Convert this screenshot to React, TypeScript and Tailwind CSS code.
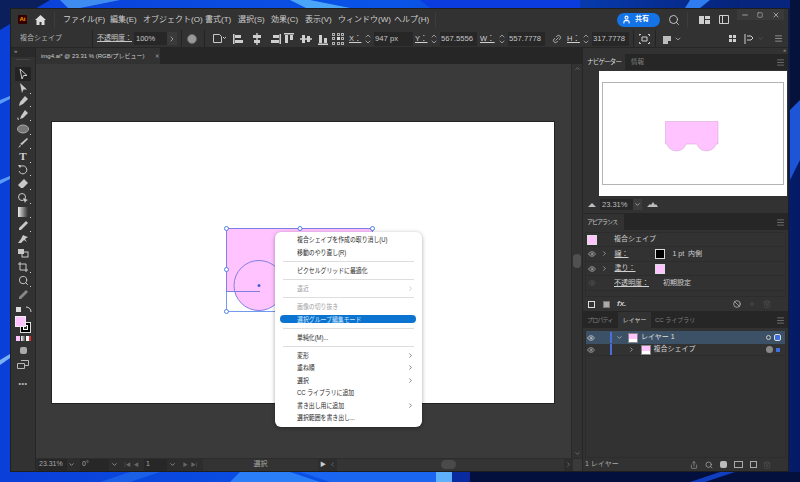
import React from "react";
import { ChevronRight, ChevronDown, ChevronUp, Search, Eye, Minus, X, Menu, Trash2, Ban, Link2, Share, Plus, Square, User } from "lucide-react";

const JP = "font-['Liberation_Sans','Noto_Sans_CJK_JP',sans-serif]";

const Sep = () => <div className="w-px h-full bg-[#232323] shrink-0" />;

const Spinner = () => (
  <div className="w-[10px] h-[14px] flex flex-col items-center justify-center text-[#c8c8c8] shrink-0">
    <ChevronUp size={8} strokeWidth={2} className="-mb-[1px]" />
    <ChevronDown size={8} strokeWidth={2} className="-mt-[1px]" />
  </div>
);

const Field = ({ label, value, w, ml, lw = "w-[14px]" }: { label: string; value: string; w: string; ml: string; lw?: string }) => (
  <div className={`flex items-center shrink-0 ${ml}`}>
    <span className={`text-[7.5px] text-[#d0d0d0] underline underline-offset-1 ${lw}`}>{label}</span>
    <Spinner />
    <div className={`h-[14px] bg-[#272727] text-[7.7px] text-[#c4c4c4] flex items-center pl-[1px] ml-[1px] ${w}`}>{value}</div>
  </div>
);

// small align icons for the control bar
const Align = ({ d }: { d: string }) => (
  <svg width="12" height="12" viewBox="0 0 12 12" className="shrink-0" fill="#cfcfcf">
    <path d={d} />
  </svg>
);

const Tool = ({ children, active, tick = true }: { children: React.ReactNode; active?: boolean; tick?: boolean }) => (
  <div className={`relative h-[13.8px] w-[16px] flex items-center justify-center shrink-0 ${active ? "bg-[#232323] rounded-[1px]" : ""}`}>
    {children}
    {tick && <div className="absolute right-[0px] bottom-[1px] w-[1px] h-[1px] bg-[#d0d0d0]" />}
  </div>
);

const Ic = ({ children }: { children: React.ReactNode }) => (
  <svg width="12" height="12" viewBox="0 0 12 12" fill="#c9c9c9" stroke="none">
    {children}
  </svg>
);

const Condensed = ({ children }: { children: React.ReactNode }) => (
  <span className="inline-block origin-left scale-x-[0.84]">{children}</span>
);

const MenuItem = ({ label, arrow, disabled }: { label: string; arrow?: boolean; disabled?: boolean }) => (
  <div className={`flex items-center justify-between pl-[22px] pr-[8px] shrink-0 h-[12.6px] ${disabled ? "text-[#a0a0a0]" : "text-[#2a2a2a]"}`}>
    <Condensed>{label}</Condensed>
    {arrow && <ChevronRight size={7} strokeWidth={2} className={disabled ? "text-[#aaa]" : "text-[#333]"} />}
  </div>
);

const MenuSep = () => <div className="h-px bg-[#dedede] mx-[8px] my-[2.2px] shrink-0" />;

const PanelMenu = () => <Menu size={9} strokeWidth={1.6} className="text-[#9a9a9a]" />;

const Thumb = () => (
  <div className="w-[10px] h-[10px] bg-white flex flex-col shrink-0 border border-[#888]">
    <div className="h-[5px] bg-[#ffc4ff]" />
  </div>
);

const Wallpaper = () => (
  <svg className="absolute inset-0" width="800" height="482" viewBox="0 0 800 482" preserveAspectRatio="none">
    <defs>
      <linearGradient id="wp" x1="0" y1="0" x2="1" y2="0">
        <stop offset="0" stopColor="#0a3fd8" />
        <stop offset="0.5" stopColor="#0a55e8" />
        <stop offset="1" stopColor="#041a66" />
      </linearGradient>
    </defs>
    <rect width="800" height="482" fill="url(#wp)" />
    <path d="M0 0h50L0 30z" fill="#0a1f5c" />
    <path d="M60 0h60L70 10z" fill="#3f8cf0" />
    <path d="M290 0h20L360 10h-50z" fill="#4aa5f8" />
    <path d="M420 0h160v8H430z" fill="#0a3ce0" />
    <path d="M690 0h20L700 8h-15z" fill="#2f7bf0" />
    <path d="M740 0h60v8h-60z" fill="#08257e" />
    <path d="M790 100L800 90V160L790 180z" fill="#1c55d8" />
    <path d="M790 0h10v100l-10 10z" fill="#04123c" />
    <path d="M0 100L10 96V99L0 104z" fill="#5a9cf5" />
    <path d="M0 180L10 176V179L0 184z" fill="#5a9cf5" />
    <path d="M0 360L10 354V358L0 365z" fill="#7ab0f5" />
    <path d="M100 482L130 472H160L130 482z" fill="#1a5fe8" />
    <path d="M240 472H290L320 482H230z" fill="#2a7ff8" />
    <path d="M300 472H450V482H330z" fill="#1a66f0" />
    <path d="M436 472H452V482H436z" fill="#5fb0fa" />
    <path d="M452 472H470V482H452z" fill="#0a2aa0" />
    <path d="M470 472H800V482H470z" fill="#030f3c" />
    <path d="M690 482L720 472H735L705 482z" fill="#0f3fc0" />
  </svg>
);

export default function App() {
  return (
    <div className={`relative w-[800px] h-[482px] overflow-hidden whitespace-nowrap ${JP}`}>
      <Wallpaper />
      {/* app window */}
      <div className="absolute left-[10px] top-[8px] w-[779px] h-[464px] bg-[#323232] flex flex-col border border-[#1e1e1e] overflow-hidden">
        {/* title bar */}
        <div className="h-[21px] flex items-center shrink-0 text-[8px] text-[#cfcfcf]">
          <div className="w-[9px] h-[9px] ml-[7px] bg-[#330000] text-[#ff9a00] text-[6px] font-bold flex items-center justify-center rounded-[1px]">Ai</div>
          <svg width="11" height="10" viewBox="0 0 11 10" className="ml-[8px]" fill="#dcdcdc"><path d="M5.5 0L11 5H9.5V10H6.5V7H4.5V10H1.5V5H0z" /></svg>
          <div className="w-px h-[16px] bg-[#3d3d3d] ml-[8px]" />
          <div className="flex ml-[8px]">
            <span className="w-[47px]">ファイル(F)</span>
            <span className="w-[33px]">編集(E)</span>
            <span className="w-[62px]">オブジェクト(O)</span>
            <span className="w-[33px]">書式(T)</span>
            <span className="w-[33px]">選択(S)</span>
            <span className="w-[34px]">効果(C)</span>
            <span className="w-[33px]">表示(V)</span>
            <span className="w-[56px]">ウィンドウ(W)</span>
            <span className="w-[40px]">ヘルプ(H)</span>
          </div>
          <div className="w-px h-[16px] bg-[#3d3d3d] ml-[1px]" />
          <div className="ml-[181px] w-[43px] h-[14px] bg-[#1473e6] rounded-full flex items-center pl-[5px] gap-[4px] text-white text-[7px] font-bold">
            <User size={9} strokeWidth={3} />
            <span>共有</span>
          </div>
          <Search size={12} strokeWidth={1.8} className="ml-[8px] text-[#d0d0d0]" />
          <div className="w-px h-[16px] bg-[#3d3d3d] ml-[7px]" />
          <svg width="11" height="8" viewBox="0 0 11 8" className="ml-[11px]" fill="#cfcfcf"><path d="M0 0h5v8H0zM6 0h5v3H6zM6 4h5v4H6z" /></svg>
          <svg width="10" height="9" viewBox="0 0 10 9" className="ml-[9px]" fill="none" stroke="#cfcfcf"><path d="M.5.5h9v8h-9zM3.5.5v8" /></svg>
          <div className="ml-[8px] w-[47px] h-[11px] -mt-[10px] bg-[#3a3a3a] flex items-center justify-around text-[#cfcfcf]">
            <Minus size={8} strokeWidth={2} />
            <Square size={6} strokeWidth={2} />
            <X size={8} strokeWidth={2} />
          </div>
        </div>
        {/* control bar */}
        <div className="h-[17px] flex items-center shrink-0 text-[7px] text-[#c8c8c8] bg-[#323232]">
          <span className="ml-[9px] w-[72px] text-[#b4b4b4]">複合シェイプ</span>
          <Sep />
          <span className="ml-[4px] w-[37px] underline underline-offset-1">不透明度：</span>
          <div className="w-[33px] h-[13px] bg-[#272727] text-[7.5px] flex items-center pl-[2px]">100%</div>
          <div className="w-[10px] h-[13px] bg-[#3a3a3a] flex items-center justify-center"><ChevronRight size={8} strokeWidth={2} /></div>
          <div className="w-[4px]" />
          <Sep />
          <div className="w-[10px] h-[10px] rounded-full bg-[#9a9a9a] border border-[#666] ml-[5px] shrink-0" />
          <div className="w-[7px]" />
          <Sep />
          <div className="ml-[7px] flex items-center w-[20px]">
            <svg width="15" height="11" viewBox="0 0 15 11" fill="none" stroke="#c9c9c9"><path d="M1.500 1.500v8h8v-6l-2-2zM11 4l1.500 1.500L14 4" /></svg>
          </div>
          <div className="flex items-center gap-[6px] ml-[1px] w-[46px]">
            <Align d="M0 1h1.500v10H0zM2 2h6v3H2zM2 7h8v3H2z" />
            <Align d="M5.300 0h1.400v12H5.300zM2 2h8v3H2zM3 7h6v3H3z" />
            <Align d="M10.500 1H12v10h-1.500zM4 2h6v3H4zM2 7h8v3H2z" />
          </div>
          <div className="flex items-center gap-[5px] ml-[4px] w-[46px]">
            <Align d="M1 0h10v1.500H1zM2 2h3v8H2zM7 2h3v5H7z" />
            <Align d="M0 5.300h12v1.400H0zM2 2h3v8H2zM7 3h3v6H7z" />
            <Align d="M1 10.500h10V12H1zM2 2h3v8H2zM7 5h3v5H7z" />
          </div>
          <div className="w-[12px] h-[12px] ml-[3px] grid grid-cols-3 gap-[1.5px] shrink-0">
            {Array.from({ length: 9 }).map((_, i) => (
              <div key={i} className={i === 4 ? "bg-[#d8d8d8]" : "border border-[#b0b0b0]"} />
            ))}
          </div>
          <Field label="X：" value="947 px" w="w-[39px]" ml="ml-[5px]" />
          <Field label="Y：" value="567.5556" w="w-[37px]" ml="ml-[2px]" />
          <Field label="W：" value="557.7778" w="w-[37px]" ml="ml-[3px]" lw="w-[17px]" />
          <Link2 size={10} strokeWidth={1.8} className="ml-[7px] shrink-0 -rotate-45" />
          <Field label="H：" value="317.7778" w="w-[37px]" ml="ml-[5px]" />
          <div className="w-[4px]" />
          <Sep />
          <svg width="11" height="10" viewBox="0 0 11 10" className="ml-[5px] shrink-0" fill="none" stroke="#cfcfcf"><path d="M0 2V.5h2M9 .5h1.500V2M10.500 8v1.500H9M2 9.500H.5V8M3 3h5v4H3z" /></svg>
          <div className="w-[5px]" />
          <Sep />
          <svg width="10" height="10" viewBox="0 0 10 10" className="ml-[5px] shrink-0" fill="#bcbcbc"><path d="M2 2h8v5H7v3H2z" /></svg>
          <ChevronDown size={8} strokeWidth={2} className="ml-[3px] shrink-0" />
          <div className="ml-[47px] w-[7px] h-[7px] grid grid-cols-2 gap-[1px] shrink-0">
            {[0, 1, 2, 3].map((i) => <div key={i} className="bg-[#cfcfcf]" />)}
          </div>
          <svg width="10" height="10" viewBox="0 0 10 10" className="ml-[8px] shrink-0" fill="none" stroke="#cfcfcf"><path d="M1 0v10M3 2h4l2 2-2 2H3" /></svg>
          <ChevronDown size={7} strokeWidth={2} className="ml-[3px] text-[#666] shrink-0" />
          <Menu size={9} strokeWidth={1.6} className="ml-[10px] shrink-0" />
        </div>
        {/* body */}
        <div className="flex-1 flex min-h-0 border-t border-[#262626]">
          {/* tool strip */}
          <div className="w-[25px] shrink-0 flex flex-col items-center bg-[#323232] border-r border-[#262626]">
            <div className="h-[9px] w-full bg-[#2a2a2a] text-[#aaa] text-[6px] leading-[7px] pl-[3px] shrink-0">»</div>
            <div className="h-px w-[14px] bg-[#444] mt-[2px] mb-[7px] shrink-0" />
            <Tool active tick={false}><Ic><path d="M3 1l7 6.500H6.500L5 11z" fill="none" stroke="#c9c9c9" /></Ic></Tool>
            <Tool><Ic><path d="M3 1l7 6.500H6.500L5 11z" /></Ic></Tool>
            <Tool><Ic><path d="M8 1l3 3-5 5-4 2 1-4z" /></Ic></Tool>
            <Tool><Ic><path d="M8 1l3 3-5 5-3 1 1-3zM1 8c-2 3 1 3 1 3" /></Ic></Tool>
            <Tool><Ic><ellipse cx="6" cy="6" rx="5.500" ry="4" fill="#777" stroke="#aaa" /></Ic></Tool>
            <Tool><Ic><path d="M10 1l1 1-6 6-2-1zM3 8l1 1-3 2z" /></Ic></Tool>
            <Tool><span className="text-[11px] font-bold leading-none text-[#d0d0d0] font-['Liberation_Serif',serif]">T</span></Tool>
            <Tool><Ic><path d="M3 3a4 4 0 1 1-1 4" fill="none" stroke="#c9c9c9" /><path d="M1 1l3 0-1 3z" /></Ic></Tool>
            <Tool><Ic><path d="M7 1l4 4-5 5H4L1 7z" /></Ic></Tool>
            <Tool><Ic><circle cx="5" cy="5" r="3.500" fill="none" stroke="#c9c9c9" /><path d="M6 6l5 2-2 1-1 2z" /></Ic></Tool>
            <Tool><div className="w-[10px] h-[10px] bg-gradient-to-r from-[#eee] to-[#333]" /></Tool>
            <Tool><Ic><path d="M9 1l2 2-1 1-6 6H2V8l6-6z" /></Ic></Tool>
            <Tool tick={false}><Ic><path d="M1 10l3-4 2-4 2 1 3 1-3 2 2 3-3-2-3 3z" /></Ic></Tool>
            <Tool tick={false}><Ic><rect x="1" y="2" width="6" height="5" /><rect x="5" y="5" width="6" height="5" fill="none" stroke="#c9c9c9" /></Ic></Tool>
            <Tool><Ic><path d="M3 1v8h8M1 3h8v8" fill="none" stroke="#c9c9c9" /></Ic></Tool>
            <Tool><Search size={11} strokeWidth={2} className="text-[#cdcdcd]" /></Tool>
            <Tool tick={false}><Ic><path d="M9 1l2 2-1 1-6 6H2V8l6-6z" fill="#888" /></Ic></Tool>
            <div className="flex items-center gap-[3px] mt-[4px] shrink-0">
              <div className="w-[7px] h-[7px] bg-[#ddd] border border-[#333]" />
              <svg width="7" height="7" viewBox="0 0 7 7" fill="none" stroke="#cfcfcf"><path d="M1 1c3 0 5 2 5 5" /></svg>
            </div>
            {/* fill and stroke swatches */}
            <div className="relative w-[16px] h-[17px] mt-[3px] shrink-0">
              <div className="absolute right-0 bottom-0 w-[11px] h-[11px] border border-[#ddd] bg-black flex items-center justify-center">
                <div className="w-[5px] h-[5px] border border-white bg-[#323232]" />
              </div>
              <div className="absolute left-0 top-0 w-[11px] h-[11px] bg-[#ffc4ff] border border-[#eee]" />
            </div>
            <div className="flex gap-[1px] mt-[3px] shrink-0">
              <div className="w-[4px] h-[5px] bg-[#ffc4ff]" />
              <div className="w-[4px] h-[5px] bg-gradient-to-r from-white to-[#555]" />
              <div className="w-[5px] h-[5px] bg-white border-r-2 border-[#e03030]" />
            </div>
            <div className="w-[7px] h-[7px] bg-[#aaa] rounded-[2px] mt-[6px] shrink-0" />
            <svg width="12" height="9" viewBox="0 0 12 9" className="mt-[6px] shrink-0" fill="none" stroke="#b8b8b8"><path d="M4 .5h7.500v5H8M.5 3.500h7v5h-7z" /></svg>
            <div className="text-[#bbb] text-[7px] font-bold leading-none mt-[11px] tracking-[0.5px] shrink-0">•••</div>
          </div>
          {/* document area */}
          <div className="w-[546px] shrink-0 flex flex-col">
            <div className="h-[16px] shrink-0 bg-[#262626] flex">
              <div className="w-[124px] bg-[#323232] text-[6px] text-[#cfcfcf] flex items-center pl-[5px] gap-[11px]">
                <span>img4.ai* @ 23.31 % (RGB/プレビュー)</span>
                <X size={6} strokeWidth={3} />
              </div>
            </div>
            <div className="flex-1 flex min-h-0">
              <div className="relative w-[535px] bg-[#3a3a3a] shrink-0 overflow-hidden">
                {/* artboard */}
                <div className="absolute left-[16px] top-[58px] w-[502px] h-[281px] bg-white shadow-[0_0_0_1px_#222]" />
                <svg className="absolute left-[186px] top-[159.5px]" width="154" height="92" viewBox="0 0 154 92" fill="none">
                  <rect x="4.500" y="4.500" width="146" height="63" fill="#ffc4ff" stroke="#7f7fe6" />
                  <circle cx="37" cy="61.500" r="25" fill="#ffc4ff" stroke="#7f7fe6" />
                  <path d="M4.500 67.500H38" stroke="#7f7fe6" />
                  <path d="M4.500 67.500V87.500H150.500" stroke="#4f81e8" strokeWidth="0.8" />
                  <circle cx="37" cy="61.500" r="1.500" fill="#4060e0" />
                  {[[4.5, 4.5], [78, 4.5], [150.5, 4.5], [4.5, 45.5], [4.5, 87.5]].map(([x, y], i) => (
                    <circle key={i} cx={x} cy={y} r="2" fill="#fff" stroke="#4f81e8" />
                  ))}
                </svg>
                {/* context menu */}
                <div className="absolute left-[239px] top-[168px] w-[147px] h-[195px] bg-white rounded-[6px] shadow-[0_1px_4px_rgba(0,0,0,0.35)] flex flex-col pt-[1.7px] text-[7px] leading-none">
                  <MenuItem label="複合シェイプを作成の取り消し(U)" />
                  <MenuItem label="移動のやり直し(R)" />
                  <MenuSep />
                  <MenuItem label="ピクセルグリッドに最適化" />
                  <MenuSep />
                  <MenuItem label="遠近" arrow disabled />
                  <MenuSep />
                  <MenuItem label="画像の切り抜き" disabled />
                  <div className="h-[12.6px] shrink-0 flex items-center">
                    <div className="h-[8px] w-[136px] ml-[5px] bg-[#0a74d0] rounded-full text-[#cde4ff] flex items-center pl-[17px]">
                      <Condensed>選択グループ編集モード</Condensed>
                    </div>
                  </div>
                  <MenuSep />
                  <MenuItem label="単純化(M)..." />
                  <MenuSep />
                  <MenuItem label="変形" arrow />
                  <MenuItem label="重ね順" arrow />
                  <MenuItem label="選択" arrow />
                  <MenuItem label="CC ライブラリに追加" />
                  <MenuItem label="書き出し用に追加" arrow />
                  <MenuItem label="選択範囲を書き出し..." />
                </div>
              </div>
              {/* vertical scrollbar */}
              <div className="w-[11px] bg-[#323232] shrink-0 flex flex-col items-center justify-between border-l border-[#2a2a2a]">
                <ChevronUp size={7} strokeWidth={2} className="text-[#8a8a8a] mt-[1px]" />
                <div className="w-[8px] h-[14px] bg-[#505050] rounded-full" />
                <ChevronDown size={7} strokeWidth={2} className="text-[#8a8a8a] mb-[1px]" />
              </div>
            </div>
            {/* status bar */}
            <div className="h-[13px] shrink-0 bg-[#2d2d2d] flex items-center text-[7px] text-[#a8a8a8]">
              <div className="w-[29px] h-[12px] bg-[#272727] ml-[2px] flex items-center pl-[1px]">23.31%</div>
              <div className="w-[9px] flex justify-center"><ChevronDown size={7} strokeWidth={2.5} /></div>
              <div className="w-[29px] h-[12px] bg-[#272727] ml-[4px] flex items-center pl-[2px]">0°</div>
              <div className="w-[10px] flex justify-center"><ChevronDown size={7} strokeWidth={2.5} /></div>
              <div className="w-[25px] flex justify-center gap-[3px] text-[#666] text-[5px]"><span>|◀</span><span>◀</span></div>
              <div className="w-[23px] h-[12px] bg-[#272727] flex items-center pl-[2px]">1</div>
              <div className="w-[10px] flex justify-center"><ChevronDown size={7} strokeWidth={2.5} /></div>
              <div className="w-[26px] flex justify-center gap-[3px] text-[#666] text-[5px]"><span>▶</span><span>▶|</span></div>
              <div className="w-[115px] h-[12px] flex items-center justify-center bg-[#333]">選択</div>
              <div className="w-[10px] flex justify-center text-[#ccc] text-[6px]">▶</div>
              <ChevronRight size={7} className="rotate-180 text-[#888] ml-[1px]" strokeWidth={2} />
              <div className="flex-1 h-[12px] ml-[1px] bg-[#343434] flex items-center">
                <div className="w-[15px] h-[9px] rounded-full bg-[#4a4a4a] ml-[104px]" />
              </div>
              <ChevronRight size={7} strokeWidth={2} className="text-[#888] mx-[1px]" />
              <div className="w-[9px] h-[12px] bg-[#3a3a3a]" />
            </div>
          </div>
          {/* right panels */}
          <div className="flex-1 min-w-0 flex flex-col bg-[#262626] text-[7px] text-[#bdbdbd] border-l border-[#262626]">
            <div className="h-[6px] bg-[#323232] text-right pr-[2px] text-[5px] leading-[5px] text-[#aaa]">«</div>
            {/* navigator */}
            <div className="h-[16px] flex items-center shrink-0 bg-[#262626]">
              <div className="w-[42px] h-full bg-[#323232] flex items-center pl-[4px] text-[#ddd] text-[6.5px] tracking-[-0.8px]">ナビゲーター</div>
              <div className="w-[20px] pl-[6px] text-[#808080] text-[6.5px]">情報</div>
              <div className="flex-1 flex justify-end pr-[3px]"><PanelMenu /></div>
            </div>
            <div className="h-[143px] shrink-0 bg-[#323232] flex flex-col">
              <div className="h-[125px] w-[188px] bg-white ml-[16px] mt-px shrink-0 flex flex-col items-center justify-center">
                <div className="w-[182px] h-[103px] border border-[#b4b4b4] flex items-center justify-center">
                  <svg width="54" height="32" viewBox="0 0 54 32" className="mt-[7px] -ml-[3px]">
                    <path d="M.5 .5H53V23H51A10 10 0 0 1 32 23H21A10 10 0 0 1 2 23H.5z" fill="#ffc4ff" stroke="#d8a8d8" strokeWidth="0.6" />
                  </svg>
                </div>
              </div>
              <div className="h-[17px] flex items-center text-[7.5px] pl-[5px]">
                <svg width="8" height="4" viewBox="0 0 8 4" fill="#bdbdbd"><path d="M4 0l4 4H0z" /></svg>
                <div className="w-[33px] h-[11px] bg-[#272727] ml-[4px] flex items-center pl-[2px]">23.31%</div>
                <div className="w-[9px] h-[11px] bg-[#3c3c3c] flex items-center justify-center"><ChevronDown size={7} strokeWidth={2.5} /></div>
                <svg width="11" height="5" viewBox="0 0 11 5" fill="#bdbdbd" className="ml-[5px]"><path d="M0 5l3-3 1 1 2-3 2 3 1-1 2 3z" /></svg>
              </div>
            </div>
            {/* appearance */}
            <div className="h-[16px] flex items-center shrink-0 mt-px">
              <div className="w-[41px] h-full bg-[#323232] flex items-center pl-[4px] text-[#ccc] text-[6px] tracking-[-1px]">アピアランス</div>
              <div className="flex-1 flex justify-end pr-[3px]"><PanelMenu /></div>
            </div>
            <div className="h-[81px] shrink-0 bg-[#323232] flex flex-col px-[2px] pt-[2px] text-[7px] text-[#d0d0d0]">
              <div className="h-[15px] flex items-center border border-[#2c2c2c] pl-[1px]">
                <div className="w-[10px] h-[10px] bg-[#ffc4ff] border border-[#ddd]" />
                <span className="ml-[17px]">複合シェイプ</span>
              </div>
              <div className="h-[14.7px] flex items-center border-x border-b border-[#2c2c2c] pl-[2px]">
                <Eye size={8} strokeWidth={2} className="text-[#bbb]" />
                <ChevronRight size={7} strokeWidth={2} className="ml-[4.5px]" />
                <span className="ml-[7px] w-[40px] underline underline-offset-1">線：</span>
                <div className="w-[10px] h-[10px] bg-black border border-[#ddd]" />
                <span className="ml-[8px]">1 pt&nbsp;&nbsp;内側</span>
              </div>
              <div className="h-[14.7px] flex items-center border-x border-b border-[#2c2c2c] pl-[2px]">
                <Eye size={8} strokeWidth={2} className="text-[#bbb]" />
                <ChevronRight size={7} strokeWidth={2} className="ml-[4.5px]" />
                <span className="ml-[7px] w-[40px] underline underline-offset-1">塗り：</span>
                <div className="w-[10px] h-[10px] bg-[#ffc4ff] border border-[#ddd]" />
              </div>
              <div className="h-[14.7px] flex items-center border-x border-b border-[#2c2c2c] pl-[2px]">
                <Eye size={8} strokeWidth={2} className="text-[#555]" />
                <span className="ml-[18px] w-[49px] underline underline-offset-1">不透明度：</span>
                <span>初期設定</span>
              </div>
              <div className="h-[6px] border-x border-b border-[#2c2c2c]" />
              <div className="flex-1 flex items-center pl-[3px] pr-[15px] text-[#ccc]">
                <div className="w-[7px] h-[7px] border border-[#ddd]" />
                <div className="w-[7px] h-[7px] bg-[#aaa] ml-[8px] border border-[#777]" />
                <span className="ml-[7px] italic font-bold text-[8px]">fx.</span>
                <Ban size={8} strokeWidth={2} className="ml-auto" />
                <Plus size={8} strokeWidth={1.5} className="ml-[7px] text-[#5a5a5a]" />
                <Trash2 size={8} strokeWidth={1.5} className="ml-[7px] text-[#5a5a5a]" />
              </div>
            </div>
            {/* layers */}
            <div className="h-[16px] flex items-center shrink-0 text-[6px] mt-px">
              <div className="pl-[4px] w-[35px] text-[#808080] tracking-[-0.8px]">プロパティ</div>
              <div className="w-[33px] h-full bg-[#323232] flex items-center justify-center text-[#ddd]">レイヤー</div>
              <div className="pl-[4px] text-[#808080]">CC ライブラリ</div>
              <div className="flex-1 flex justify-end pr-[3px]"><PanelMenu /></div>
            </div>
            <div className="flex-1 bg-[#323232] flex flex-col px-[2px] pt-[3px] min-h-0 text-[7px]">
              <div className="flex-1 flex flex-col border-x border-b border-[#2c2c2c]">
                <div className="h-[13px] flex items-center bg-[#3c5066] text-[#e0e0e0] shrink-0">
                  <Eye size={8} strokeWidth={2} className="ml-[1px]" />
                  <div className="w-[2px] h-[11px] bg-[#4a6fd8] ml-[15px]" />
                  <ChevronDown size={7} strokeWidth={2} className="ml-[3.5px]" />
                  <div className="ml-[5.5px]"><Thumb /></div>
                  <span className="ml-[3px]">レイヤー 1</span>
                  <div className="ml-auto w-[5px] h-[5px] rounded-full border border-[#ccc]" />
                  <div className="w-[5px] h-[5px] bg-[#3a70e0] rounded-[1px] ml-[4px] mr-[5px] outline outline-1 outline-[#ddd]" />
                </div>
                <div className="h-[12px] flex items-center text-[#d8d8d8] shrink-0 border-b border-[#2c2c2c]">
                  <Eye size={8} strokeWidth={2} className="ml-[1px] text-[#bbb]" />
                  <div className="w-[2px] h-[11px] bg-[#4a6fd8] ml-[15px]" />
                  <ChevronRight size={7} strokeWidth={2} className="ml-[15.5px]" />
                  <div className="ml-[6px]"><Thumb /></div>
                  <span className="ml-[3px]">複合シェイプ</span>
                  <div className="ml-auto w-[7px] h-[7px] rounded-full bg-[#888]" />
                  <div className="w-[4px] h-[4px] bg-[#3a70e0] ml-[3px] mr-[5px]" />
                </div>
              </div>
              <div className="h-[13px] shrink-0 flex items-center text-[#aaa] pl-[0px] pr-[15px]">
                <span className="text-[7px]">1 レイヤー</span>
                <Share size={8} strokeWidth={1.8} className="ml-auto" />
                <Search size={8} strokeWidth={2.2} className="ml-[7px]" />
                <div className="w-[7px] h-[7px] bg-[#bbb] rounded-[2px] ml-[7px]" />
                <div className="w-[9px] h-[7px] border border-[#aaa] ml-[7px]" />
                <div className="w-[7px] h-[7px] border border-[#aaa] ml-[7px]" />
                <Trash2 size={8} strokeWidth={1.5} className="ml-[6px] text-[#5a5a5a]" />
              </div>
            </div>
          </div>
        </div>
      </div>
    </div>
  );
}
